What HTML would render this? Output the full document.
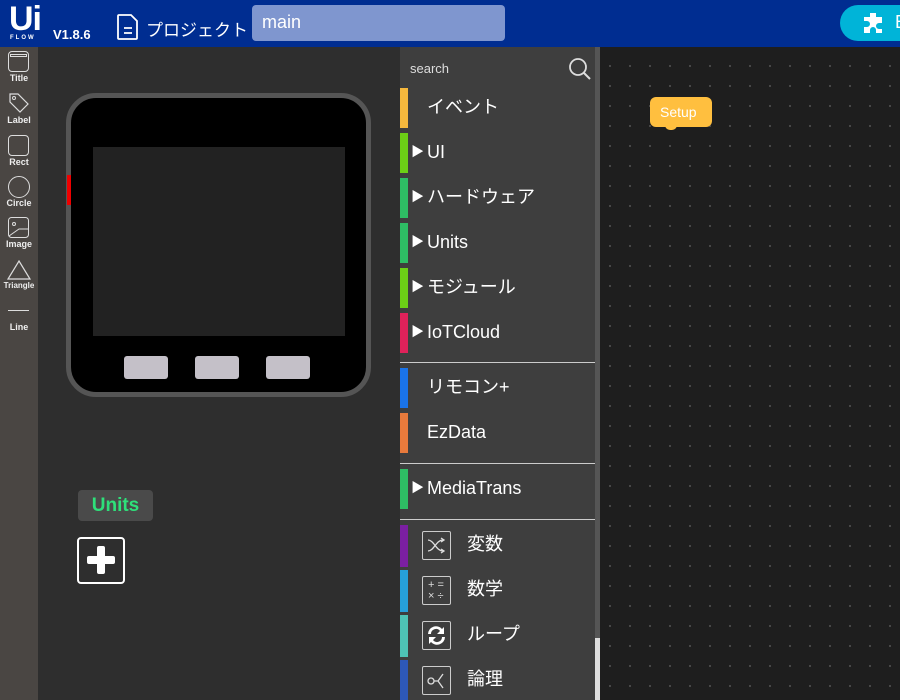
<!DOCTYPE html>
<html><head><meta charset="utf-8"><style>
*{margin:0;padding:0;box-sizing:border-box}
html,body{width:900px;height:700px;overflow:hidden}
body{position:relative;background:#2e2e2e;font-family:"Liberation Sans","Noto Sans CJK JP",sans-serif;color:#fff}
.a{position:absolute}
.hdr{left:0;top:0;width:900px;height:47px;background:#002d91}
.tb{left:0;top:47px;width:38px;height:653px;background:#4a4643}
.ti{position:absolute;left:0;width:38px;text-align:center;font-size:9px;font-weight:bold;color:#eee}
.cat{left:400px;top:47px;width:195px;height:653px;background:#3e3e3e;overflow:hidden}
.sb{left:595px;top:47px;width:5px;height:653px;background:#555}
.ws{left:600px;top:47px;width:300px;height:653px;background-color:#1e1e1e;background-image:radial-gradient(#555 0.8px,transparent 1px);background-size:20px 20px;background-position:0px 9px}
.row{position:absolute;left:0;width:195px;height:40px;font-size:18px;line-height:38px}
.bar{position:absolute;left:0;top:0;width:8px;height:40px}
.row span{position:absolute;left:27px}
.row i{position:absolute;left:11px;font-style:normal;font-size:13px}
.ic{position:absolute;left:22px;top:6px;width:29px;height:29px;border:1px solid #ccc;border-radius:2px}
.row b{position:absolute;left:67px;font-weight:normal}
.sep{position:absolute;left:0;width:195px;height:1px;background:#ccc}
</style></head><body>
<div class="a hdr">
 <div class="a" style="left:9px;top:2px;font-size:34px;font-weight:900;line-height:34px;letter-spacing:-1px">Ui</div>
 <div class="a" style="left:10px;top:35px;font-size:6px;font-weight:bold;letter-spacing:2px">FLOW</div>
 <div class="a" style="left:53px;top:27px;font-size:13px;font-weight:bold">V1.8.6</div>
 <svg class="a" style="left:116px;top:13px" width="24" height="28" viewBox="0 0 24 28"><path d="M3 2h12l6 6v17a1 1 0 0 1-1 1H3a1 1 0 0 1-1-1V3a1 1 0 0 1 1-1z" fill="none" stroke="#fff" stroke-width="1.8"/><path d="M8 15h8M8 20h8" stroke="#fff" stroke-width="1.8"/></svg>
 <div class="a" style="left:146px;top:20px;font-size:17px;line-height:22px">プロジェクト</div>
 <div class="a" style="left:252px;top:5px;width:253px;height:36px;background:#7f96cf;border-radius:4px;font-size:18px;line-height:34px;padding-left:10px">main</div>
 <div class="a" style="left:840px;top:5px;width:80px;height:36px;background:#00b4d8;border-radius:18px"></div>
 <svg class="a" style="left:861px;top:11px" width="24" height="24" viewBox="0 0 24 24"><path d="M9 2h6v4h6v6h-3a3 3 0 0 0 0 6h3v4h-6v-3a3 3 0 0 0-6 0v3H3v-6h3a3 3 0 0 0 0-6H3V6h6z" fill="#fff"/></svg>
 <div class="a" style="left:895px;top:12px;font-size:18px">E</div>
</div>
<div class="a tb">
 <div class="a" style="left:8px;top:4px;width:21px;height:21px;border:1px solid #ddd;border-radius:4px"><div style="margin:2px 1px;height:3px;border:1px solid #ddd"></div></div>
 <div class="ti" style="top:26px">Title</div>
 <svg class="a" style="left:8px;top:45px" width="22" height="22"><path d="M2 2h8l10 10-8 8L2 10z" fill="none" stroke="#ddd" stroke-width="1.2"/><circle cx="6" cy="6" r="1.5" fill="none" stroke="#ddd"/></svg>
 <div class="ti" style="top:68px">Label</div>
 <div class="a" style="left:8px;top:88px;width:21px;height:21px;border:1px solid #ddd;border-radius:4px"></div>
 <div class="ti" style="top:110px">Rect</div>
 <div class="a" style="left:8px;top:129px;width:22px;height:22px;border:1px solid #ddd;border-radius:50%"></div>
 <div class="ti" style="top:151px">Circle</div>
 <svg class="a" style="left:8px;top:170px" width="22" height="22"><rect x="0.5" y="0.5" width="20" height="20" rx="3" fill="none" stroke="#ddd"/><circle cx="6" cy="7" r="1.5" fill="none" stroke="#ddd"/><path d="M1 19l10-7 9 0" fill="none" stroke="#ddd"/></svg>
 <div class="ti" style="top:192px">Image</div>
 <svg class="a" style="left:7px;top:213px" width="24" height="20"><path d="M12 1L23 19H1z" fill="none" stroke="#ddd" stroke-width="1.2"/></svg>
 <div class="ti" style="top:234px;font-size:8px">Triangle</div>
 <div class="a" style="left:8px;top:263px;width:21px;height:1px;background:#ddd"></div>
 <div class="ti" style="top:275px">Line</div>
</div>
<div class="a" style="left:66px;top:93px;width:305px;height:304px;background:#000;border:5px solid #555;border-radius:30px"></div>
<div class="a" style="left:67px;top:175px;width:4px;height:30px;background:#e00"></div>
<div class="a" style="left:93px;top:147px;width:252px;height:189px;background:#222"></div>
<div class="a" style="left:124px;top:356px;width:44px;height:23px;background:#c4c0c8;border-radius:3px"></div>
<div class="a" style="left:195px;top:356px;width:44px;height:23px;background:#c4c0c8;border-radius:3px"></div>
<div class="a" style="left:266px;top:356px;width:44px;height:23px;background:#c4c0c8;border-radius:3px"></div>
<div class="a" style="left:78px;top:490px;width:75px;height:31px;background:#4a4a4a;border-radius:4px;color:#2ee07a;font-weight:bold;font-size:19px;text-align:center;line-height:31px">Units</div>
<div class="a" style="left:77px;top:537px;width:48px;height:47px;border:2px solid #fff;border-radius:4px"><div class="a" style="left:8px;top:17px;width:28px;height:8px;background:#fff;border-radius:2px"></div><div class="a" style="left:18px;top:7px;width:8px;height:28px;background:#fff;border-radius:2px"></div></div>
<div class="a cat">
 <div class="a" style="left:10px;top:14px;font-size:13px;color:#ddd">search</div>
 <svg class="a" style="left:168px;top:10px" width="24" height="24"><circle cx="10" cy="10" r="8" fill="none" stroke="#ddd" stroke-width="1.8"/><path d="M16 16l6 6" stroke="#ddd" stroke-width="2"/></svg>
 <div class="row" style="top:41px"><div class="bar" style="background:#f5b83d"></div><span>イベント</span></div>
 <div class="row" style="top:86px"><div class="bar" style="background:#6ccf16"></div><i>▶</i><span>UI</span></div>
 <div class="row" style="top:131px"><div class="bar" style="background:#2ebd64"></div><i>▶</i><span>ハードウェア</span></div>
 <div class="row" style="top:176px"><div class="bar" style="background:#2ebd64"></div><i>▶</i><span>Units</span></div>
 <div class="row" style="top:221px"><div class="bar" style="background:#6ccf16"></div><i>▶</i><span>モジュール</span></div>
 <div class="row" style="top:266px"><div class="bar" style="background:#e0225a"></div><i>▶</i><span>IoTCloud</span></div>
 <div class="sep" style="top:315px"></div>
 <div class="row" style="top:321px"><div class="bar" style="background:#1a73e8"></div><span>リモコン+</span></div>
 <div class="row" style="top:366px"><div class="bar" style="background:#e87a3c"></div><span>EzData</span></div>
 <div class="sep" style="top:416px"></div>
 <div class="row" style="top:422px"><div class="bar" style="background:#2ebd64"></div><i>▶</i><span>MediaTrans</span></div>
 <div class="sep" style="top:472px"></div>
 <div class="row" style="top:478px;height:42px"><div class="bar" style="background:#7b1fa2;height:42px"></div><div class="ic"><svg width="27" height="27"><path d="M5 8c6 0 8 11 15 11M5 19c6 0 8-11 15-11M18 6l3 2-3 2M18 17l3 2-3 2" fill="none" stroke="#ddd" stroke-width="1.3"/></svg></div><b>変数</b></div>
 <div class="row" style="top:523px;height:42px"><div class="bar" style="background:#26a0da;height:42px"></div><div class="ic" style="font-size:11px;line-height:11px;padding:3px 5px;color:#ddd">+&nbsp;=<br>×&nbsp;÷</div><b>数学</b></div>
 <div class="row" style="top:568px;height:42px"><div class="bar" style="background:#4ec3b5;height:42px"></div><div class="ic"><svg width="27" height="27"><path d="M5 12a8 8 0 0 1 14-5l2-2v7h-7l3-3a5 5 0 0 0-9 3zM22 15a8 8 0 0 1-14 5l-2 2v-7h7l-3 3a5 5 0 0 0 9-3z" fill="#fff"/></svg></div><b>ループ</b></div>
 <div class="row" style="top:613px;height:42px"><div class="bar" style="background:#2d58b8;height:42px"></div><div class="ic"><svg width="27" height="27"><circle cx="8" cy="14" r="3" fill="none" stroke="#ddd" stroke-width="1.3"/><path d="M11 14h4l5-7M15 14l5 7" fill="none" stroke="#ddd" stroke-width="1.3"/></svg></div><b>論理</b></div>
</div>
<div class="a sb"></div>
<div class="a" style="left:595px;top:638px;width:5px;height:62px;background:#ddd"></div>
<div class="a ws"></div>
<div class="a" style="left:650px;top:97px;width:62px;height:30px;background:#ffbf3f;border-radius:6px;font-size:14px;line-height:30px;padding-left:10px">Setup</div>
<div class="a" style="left:665px;top:125px;width:12px;height:5px;background:#ffbf3f;border-radius:0 0 5px 5px"></div>
</body></html>
